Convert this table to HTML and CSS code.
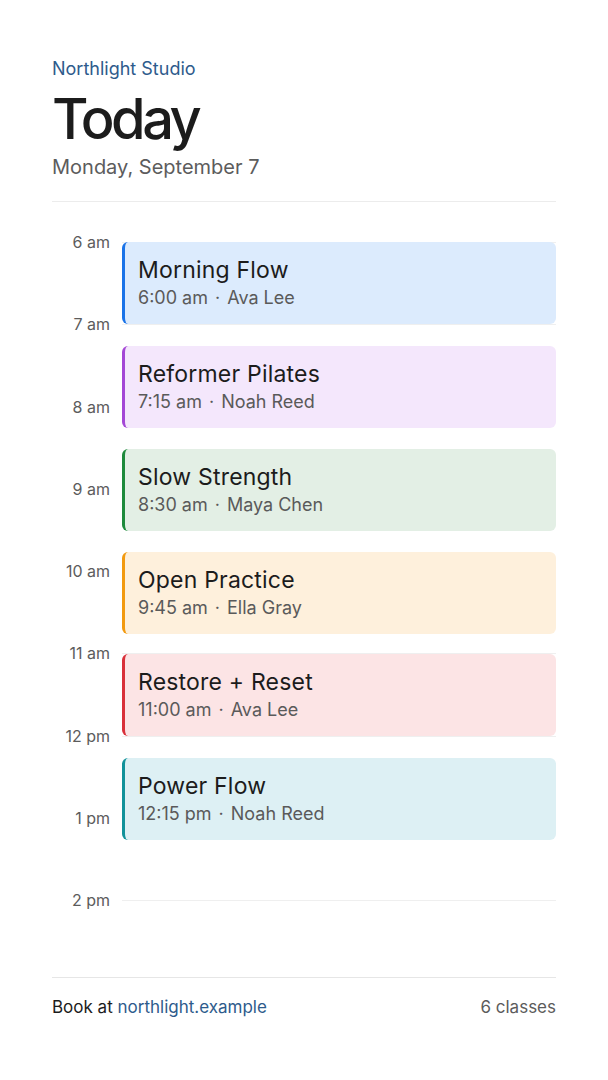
FILE: index.html
```html
<!DOCTYPE html>
<html lang="en">
<head>
  <meta charset="UTF-8">
  <meta name="viewport" content="width=device-width, initial-scale=1.0">
  <title>Today - Northlight Studio</title>
  <link rel="stylesheet" href="styles.css">
</head>
<body>
  <div class="page">
    <header class="header">
      <div class="brand">Northlight Studio</div>
      <h1 class="title">Today</h1>
      <div class="date">Monday, September 7</div>
    </header>

    <section class="timeline">
      <div class="hour"><span class="hour-label">6 am</span><span class="hour-line"></span></div>
      <div class="hour"><span class="hour-label">7 am</span><span class="hour-line"></span></div>
      <div class="hour"><span class="hour-label">8 am</span><span class="hour-line"></span></div>
      <div class="hour"><span class="hour-label">9 am</span><span class="hour-line"></span></div>
      <div class="hour"><span class="hour-label">10 am</span><span class="hour-line"></span></div>
      <div class="hour"><span class="hour-label">11 am</span><span class="hour-line"></span></div>
      <div class="hour"><span class="hour-label">12 pm</span><span class="hour-line"></span></div>
      <div class="hour"><span class="hour-label">1 pm</span><span class="hour-line"></span></div>
      <div class="hour hour-last"><span class="hour-label">2 pm</span><span class="hour-line"></span></div>

      <div class="events">
        <div class="event event-blue" style="top: 0px;">
          <div class="event-name">Morning Flow</div>
          <div class="event-meta">6:00 am<span class="dot">·</span>Ava Lee</div>
        </div>
        <div class="event event-purple" style="top: 104px;">
          <div class="event-name">Reformer Pilates</div>
          <div class="event-meta">7:15 am<span class="dot">·</span>Noah Reed</div>
        </div>
        <div class="event event-green" style="top: 207px;">
          <div class="event-name">Slow Strength</div>
          <div class="event-meta">8:30 am<span class="dot">·</span>Maya Chen</div>
        </div>
        <div class="event event-orange" style="top: 310px;">
          <div class="event-name">Open Practice</div>
          <div class="event-meta">9:45 am<span class="dot">·</span>Ella Gray</div>
        </div>
        <div class="event event-red" style="top: 412px;">
          <div class="event-name">Restore + Reset</div>
          <div class="event-meta">11:00 am<span class="dot">·</span>Ava Lee</div>
        </div>
        <div class="event event-teal" style="top: 516px;">
          <div class="event-name">Power Flow</div>
          <div class="event-meta">12:15 pm<span class="dot">·</span>Noah Reed</div>
        </div>
      </div>
    </section>

    <footer class="footer">
      <span>Book at <a class="link" href="#">northlight.example</a></span>
      <span class="count">6 classes</span>
    </footer>
  </div>
</body>
</html>
```

FILE: styles.css
```css
body {
  margin: 0;
  padding: 0;
  background: #fff;
  font-family: 'Inter', 'Noto Sans', sans-serif;
  color: #1c1c1c;
}

.page {
  padding: 57px 52px 0;
}

.header {
  padding-bottom: 20px;
  border-bottom: 1px solid #ececec;
}

.brand {
  font-size: 18px;
  line-height: 24px;
  color: #2e5b8c;
}

.title {
  margin: 6px 0 0;
  font-size: 56px;
  line-height: 64px;
  font-weight: 500;
  letter-spacing: -3.5px;
  color: #1c1c1c;
}

.date {
  margin-top: 2px;
  font-size: 20px;
  line-height: 28px;
  color: #5c5c5c;
}

.timeline {
  position: relative;
  margin-top: 40px;
}

.hour {
  display: flex;
  height: 82.25px;
}

.hour-last {
  height: 77px;
}

.hour-label {
  width: 58px;
  margin-top: -10px;
  font-size: 16px;
  line-height: 20px;
  text-align: right;
  color: #5c5c5c;
}

.hour-line {
  flex: 1;
  margin-left: 12px;
  border-top: 1px solid #efefef;
}

.events {
  position: absolute;
  top: 0;
  left: 70px;
  right: 0;
}

.event {
  position: absolute;
  left: 0;
  right: 0;
  height: 82px;
  box-sizing: border-box;
  padding: 13px 13px 0;
  border-left: 3px solid;
  border-radius: 6px;
}

.event-name {
  font-size: 23px;
  line-height: 30px;
  letter-spacing: 0.2px;
  color: #1c1c1c;
}

.event-meta {
  margin-top: 1px;
  font-size: 18px;
  line-height: 24px;
  color: #5a5a5a;
}

.dot {
  margin: 0 7px;
}

.event-blue {
  background: #dcebfd;
  border-color: #1a73e8;
}

.event-purple {
  background: #f4e7fc;
  border-color: #a447d6;
}

.event-green {
  background: #e3efe5;
  border-color: #1e8a3c;
}

.event-orange {
  background: #fef0dc;
  border-color: #f29a10;
}

.event-red {
  background: #fce4e5;
  border-color: #d9303a;
}

.event-teal {
  background: #ddf0f4;
  border-color: #11929a;
}

.footer {
  display: flex;
  justify-content: space-between;
  padding-top: 18px;
  border-top: 1px solid #e6e6e6;
  font-size: 17px;
  line-height: 22px;
  color: #1c1c1c;
}

.link {
  color: #2e5b8c;
  text-decoration: none;
}

.count {
  color: #5c5c5c;
}
```
